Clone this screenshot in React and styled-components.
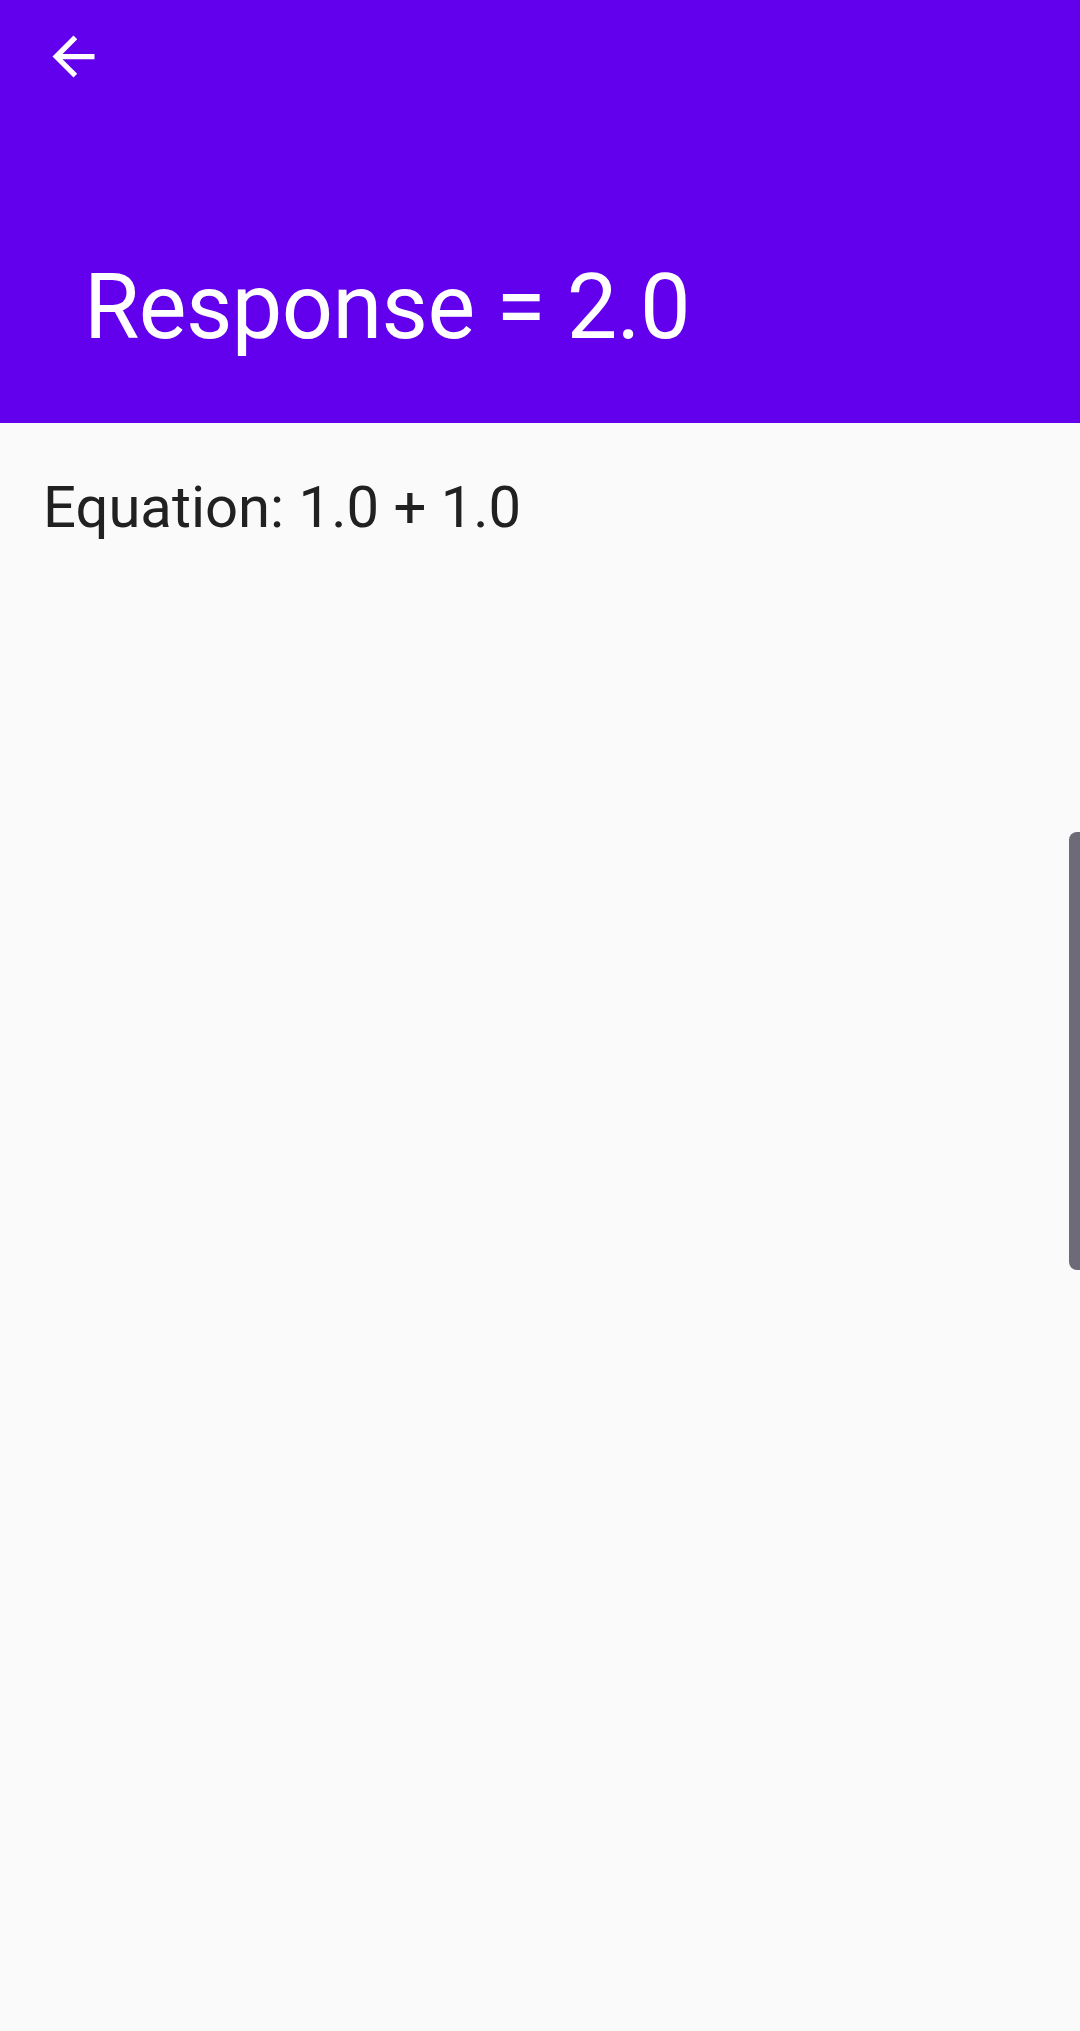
import React from 'react'
import styled, { createGlobalStyle } from 'styled-components'

const GlobalStyle = createGlobalStyle`
  html, body {
    margin: 0;
    padding: 0;
    background: #fafafa;
    font-family: Roboto, "Liberation Sans", sans-serif;
  }
`

const Screen = styled.div`
  position: relative;
  min-height: 100vh;
  background: #fafafa;
  overflow: hidden;
`

const AppBar = styled.header`
  height: 423px;
  box-sizing: border-box;
  background: #6200ee;
  display: flex;
  flex-direction: column;
  justify-content: space-between;
  padding: 25px 0 70px 0;
`

const BackButton = styled.button`
  width: 63px;
  height: 63px;
  margin-left: 42px;
  padding: 0;
  border: none;
  background: transparent;
  color: #ffffff;
  cursor: pointer;
  display: flex;
`

const Title = styled.h1`
  margin: 0 0 0 84px;
  font-weight: 400;
  font-size: 90px;
  line-height: 90px;
  color: #ffffff;
  letter-spacing: -0.6px;
`

const Content = styled.main`
  padding: 55px 0 0 43px;
`

const Equation = styled.p`
  margin: 0;
  font-size: 58px;
  line-height: 58px;
  color: #212121;
`

const ScrollThumb = styled.div`
  position: absolute;
  right: 0;
  top: 832px;
  width: 11px;
  height: 438px;
  background: #6e6a78;
  border-radius: 8px 0 0 8px;
`

const ArrowBack = () => (
  <svg width="63" height="63" viewBox="0 0 24 24" fill="currentColor">
    <path d="M20 11H7.83l5.59-5.59L12 4l-8 8 8 8 1.41-1.41L7.83 13H20v-2z" />
  </svg>
)

const App = () => {
  return (
    <Screen>
      <GlobalStyle />
      <AppBar>
        <BackButton aria-label="Back">
          <ArrowBack />
        </BackButton>
        <Title>Response = 2.0</Title>
      </AppBar>
      <Content>
        <Equation>Equation: 1.0 + 1.0</Equation>
      </Content>
      <ScrollThumb />
    </Screen>
  )
}

export default App
